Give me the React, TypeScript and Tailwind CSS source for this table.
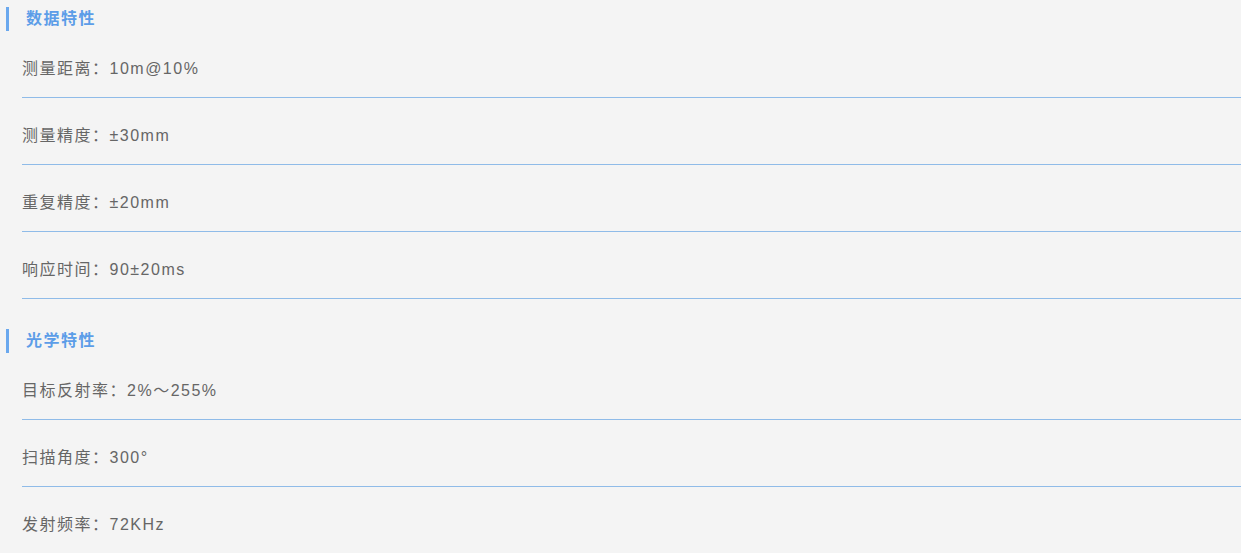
const sections = [
  {
    title: '数据特性',
    items: ['测量距离：10m@10%', '测量精度：±30mm', '重复精度：±20mm', '响应时间：90±20ms'],
  },
  {
    title: '光学特性',
    items: ['目标反射率：2%～255%', '扫描角度：300°', '发射频率：72KHz'],
  },
];

function SectionTitle({ title }: { title: string }) {
  return (
    <div className="flex items-center pl-[6px] pt-[7px]">
      <div className="w-[3px] h-[24px] bg-[#6aa8ee]" />
      <h2 className="ml-[17px] text-[16px] leading-[24px] font-bold tracking-[1.5px] text-[#5c9de8]">{title}</h2>
    </div>
  );
}

export default function App() {
  return (
    <div
      className="w-[1241px] h-[553px] overflow-hidden bg-[#f4f4f4]"
      style={{ fontFamily: '"Liberation Sans", Arial, "Noto Sans CJK SC", sans-serif' }}
    >
      {sections.map((s, si) => (
        <section key={s.title} className={si > 0 ? 'mt-[23px]' : ''}>
          <SectionTitle title={s.title} />
          <ul className="pl-[22px]">
            {s.items.map((item) => (
              <li
                key={item}
                className="h-[67px] pt-[28px] border-b border-[#8fbbe8] text-[16px] leading-[20px] tracking-[1.5px] text-[#666666]"
              >
                {item}
              </li>
            ))}
          </ul>
        </section>
      ))}
    </div>
  );
}
